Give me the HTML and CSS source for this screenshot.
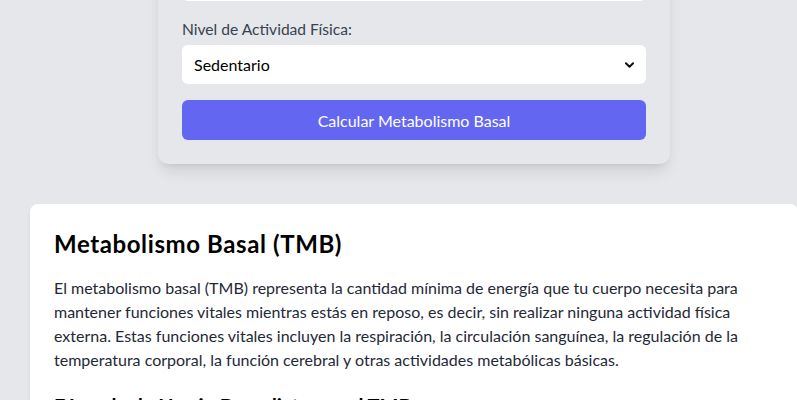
FILE: index.html
```html
<!DOCTYPE html>
<html lang="es">
<head>
<meta charset="utf-8">
<title>Calculadora de Metabolismo Basal</title>
<link rel="stylesheet" href="styles.css">
</head>
<body>
<main class="page">
  <section class="calc-card">
    <div class="field">
      <input class="text-input" type="number" aria-label="Edad">
    </div>
    <div class="field">
      <label class="field-label" for="actividad">Nivel de Actividad Física:</label>
      <div class="select-wrap">
        <select id="actividad" class="select">
          <option>Sedentario</option>
          <option>Ligero</option>
          <option>Moderado</option>
          <option>Activo</option>
          <option>Muy activo</option>
        </select>
        <svg class="chevron" viewBox="0 0 10 6" width="9" height="6" aria-hidden="true"><path d="M1 1l4 4 4-4" fill="none" stroke="#111" stroke-width="2.2" stroke-linecap="round" stroke-linejoin="round"/></svg>
      </div>
    </div>
    <button class="btn" type="button">Calcular Metabolismo Basal</button>
  </section>

  <article class="info-card">
    <h2 class="info-title">Metabolismo Basal (TMB)</h2>
    <p class="info-text">El metabolismo basal (TMB) representa la cantidad mínima de energía que tu cuerpo necesita para mantener funciones vitales mientras estás en reposo, es decir, sin realizar ninguna actividad física externa. Estas funciones vitales incluyen la respiración, la circulación sanguínea, la regulación de la temperatura corporal, la función cerebral y otras actividades metabólicas básicas.</p>
    <h3 class="info-subtitle">Fórmula de Harris-Benedict para el TMB</h3>
  </article>
</main>
</body>
</html>
```
FILE: styles.css
```css
html, body {
  margin: 0;
  padding: 0;
}
body {
  background: #e5e7eb;
  font-family: "Lato", "Liberation Sans", sans-serif;
  font-size: 16px;
  line-height: 24px;
  color: #111827;
  overflow-x: hidden;
}
.page {
  width: 828px;
  margin-top: -63px;
  display: flex;
  flex-direction: column;
  align-items: center;
  padding-bottom: 40px;
}
.calc-card {
  width: 512px;
  box-sizing: border-box;
  padding: 24px;
  background: #e5e7eb;
  border-radius: 10px;
  box-shadow: 0 10px 15px -3px rgba(0,0,0,0.10), 0 4px 6px -4px rgba(0,0,0,0.10);
  display: flex;
  flex-direction: column;
}
.field {
  display: flex;
  flex-direction: column;
  margin-bottom: 16px;
}
.text-input {
  height: 40px;
  box-sizing: border-box;
  border: none;
  border-radius: 6px;
  background: #fff;
}
.field-label {
  color: #374151;
  margin-bottom: 4px;
  font-size: 15.6px;
}
.select-wrap {
  position: relative;
}
.select {
  appearance: none;
  -webkit-appearance: none;
  width: 100%;
  height: 39px;
  box-sizing: border-box;
  border: none;
  border-radius: 6px;
  background: #fff;
  padding: 0 12px;
  font-family: inherit;
  font-size: 16px;
  color: #000;
}
.chevron {
  position: absolute;
  right: 12px;
  top: 17px;
  pointer-events: none;
}
.btn {
  height: 40px;
  border: none;
  border-radius: 6px;
  background: #6366f1;
  color: #fff;
  font-family: inherit;
  font-size: 16px;
  cursor: pointer;
}
.info-card {
  align-self: stretch;
  margin: 40px 30px 0;
  padding: 24px;
  background: #fff;
  border-radius: 8px;
  box-shadow: 0 4px 6px -1px rgba(0,0,0,0.08), 0 2px 4px -2px rgba(0,0,0,0.06);
}
.info-title {
  margin: 0 0 16px;
  font-size: 24px;
  line-height: 32px;
  font-weight: 700;
  letter-spacing: 0.6px;
  color: #000;
}
.info-text {
  margin: 0 0 20px;
  color: #1f2937;
}
.info-subtitle {
  margin: 0;
  font-size: 20px;
  line-height: 28px;
  font-weight: 700;
  color: #000;
}
```
